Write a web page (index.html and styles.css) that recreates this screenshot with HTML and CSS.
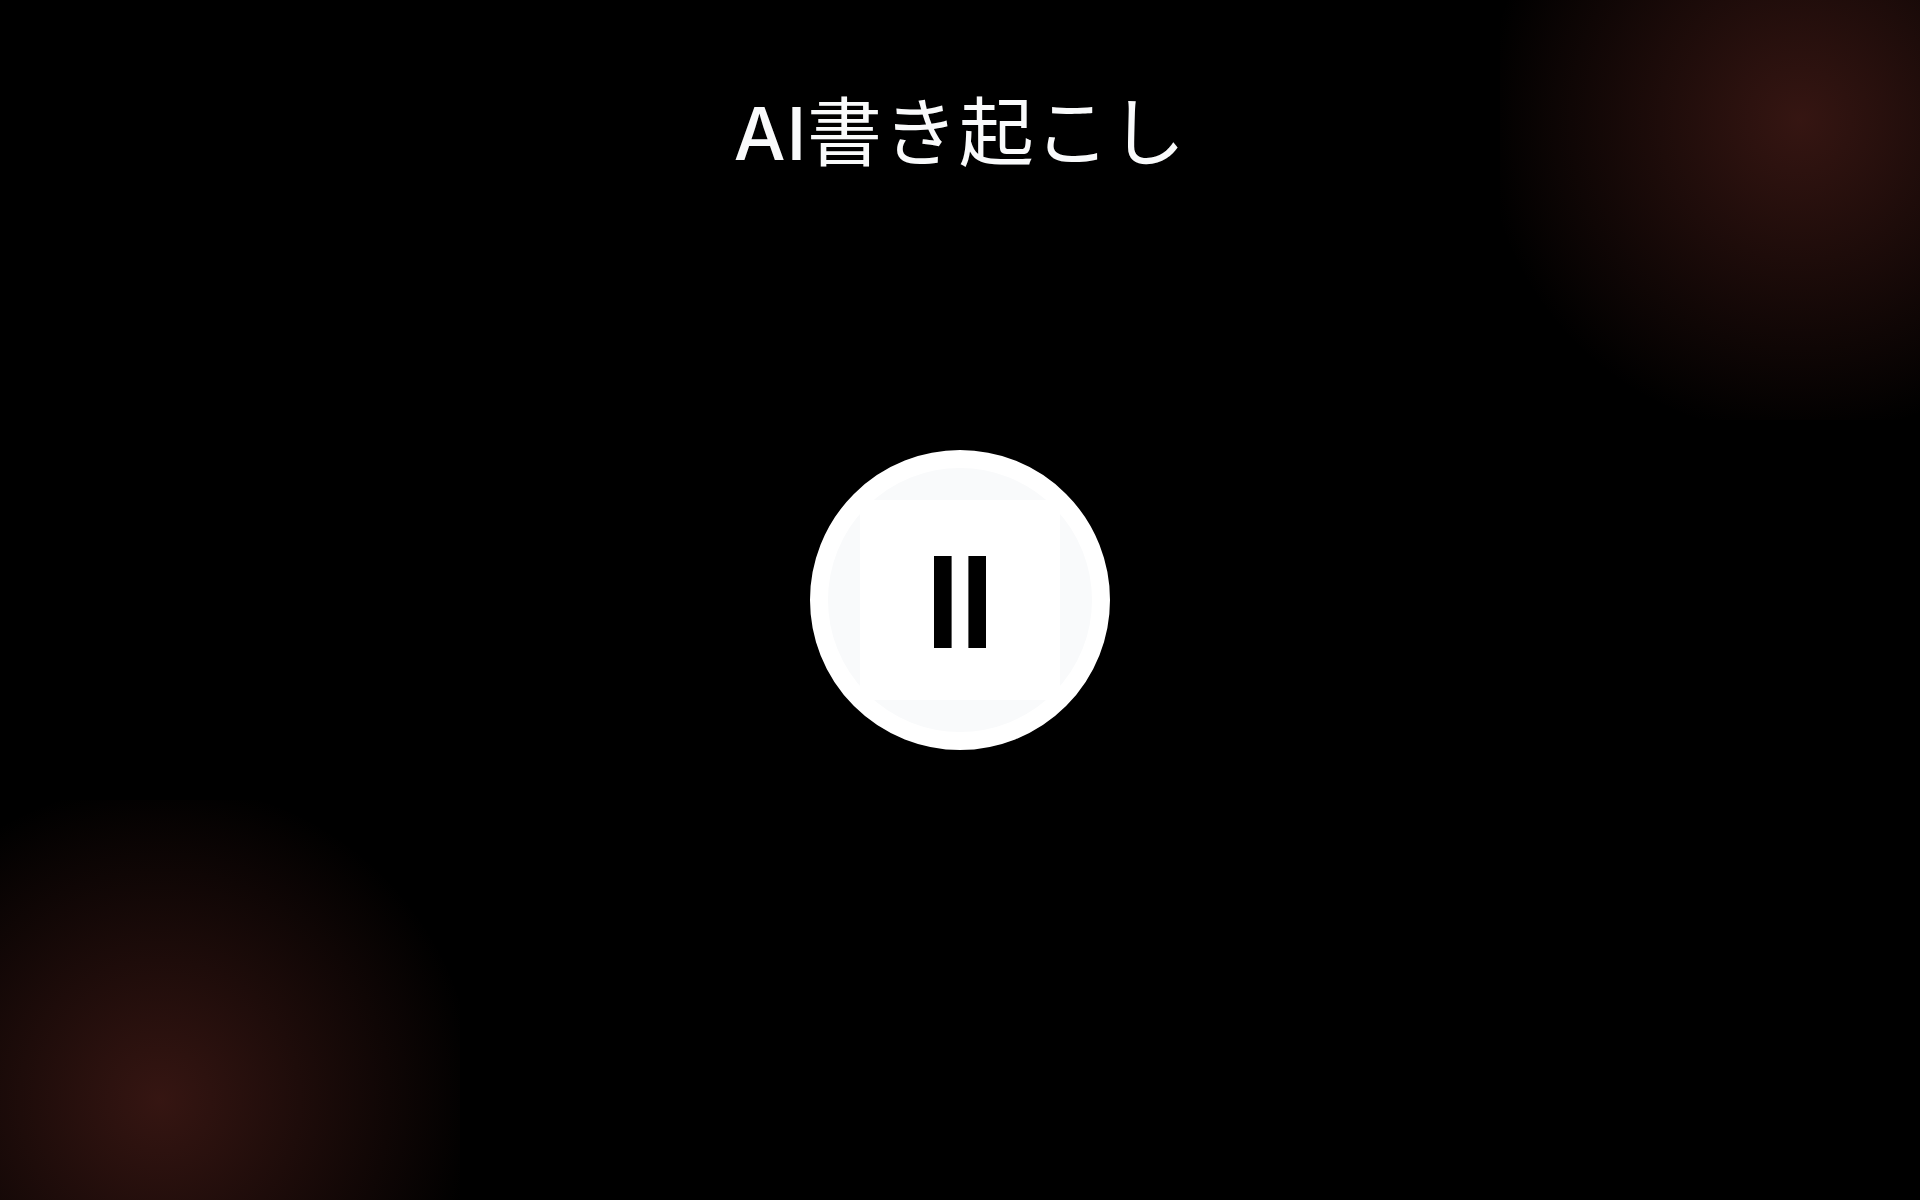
FILE: index.html
```html
<!DOCTYPE html>
<html lang="ja">
<head>
<meta charset="utf-8">
<title>AI書き起こし</title>
<link rel="stylesheet" href="styles.css">
</head>
<body>
<div class="glow glow-top"></div>
<div class="glow glow-bottom"></div>
<main class="page">
  <h1 class="title"><span class="latin">AI</span>書き起こし</h1>
  <button class="record" type="button" aria-label="一時停止">
    <span class="record-inner">
      <svg class="pause" viewBox="0 0 52 92" aria-hidden="true">
        <rect x="0" y="0" width="17.6" height="92"></rect>
        <rect x="34.4" y="0" width="17.6" height="92"></rect>
      </svg>
    </span>
  </button>
</main>
</body>
</html>
```
FILE: styles.css
```css
* { box-sizing: border-box; }
html, body { margin: 0; height: 100%; }
body {
  background: #000;
  overflow: hidden;
  position: relative;
  font-family: Roboto, "Noto Sans CJK JP", sans-serif;
}
.glow {
  position: absolute;
  width: 600px;
  height: 600px;
  background: radial-gradient(circle, rgba(240, 96, 80, 0.225), rgba(240, 96, 80, 0) 75%);
}
.glow-top { top: -180px; right: -180px; }
.glow-bottom { bottom: -200px; left: -140px; }
.page {
  position: relative;
  height: 100%;
  display: grid;
  grid-template-rows: 1fr auto 1fr;
  justify-items: center;
}
.title {
  margin: 0;
  padding-top: 92px;
  font-size: 75px;
  line-height: 84px;
  font-weight: 400;
  letter-spacing: 0.8px;
  color: #f9fafb;
}
.latin { font-family: Inter, sans-serif; font-size: 73px; font-weight: 500; }
.record {
  grid-row: 2;
  width: 300px;
  height: 300px;
  padding: 0;
  border: 18px solid #fff;
  border-radius: 50%;
  background: #f9fafb;
  display: flex;
  align-items: center;
  justify-content: center;
}
.record-inner {
  width: 200px;
  height: 200px;
  background: #fff;
  display: flex;
  align-items: center;
  justify-content: center;
  flex: none;
}
.pause { width: 52px; height: 92px; margin: 4px 0 0 -1px; fill: #000; display: block; }
```
